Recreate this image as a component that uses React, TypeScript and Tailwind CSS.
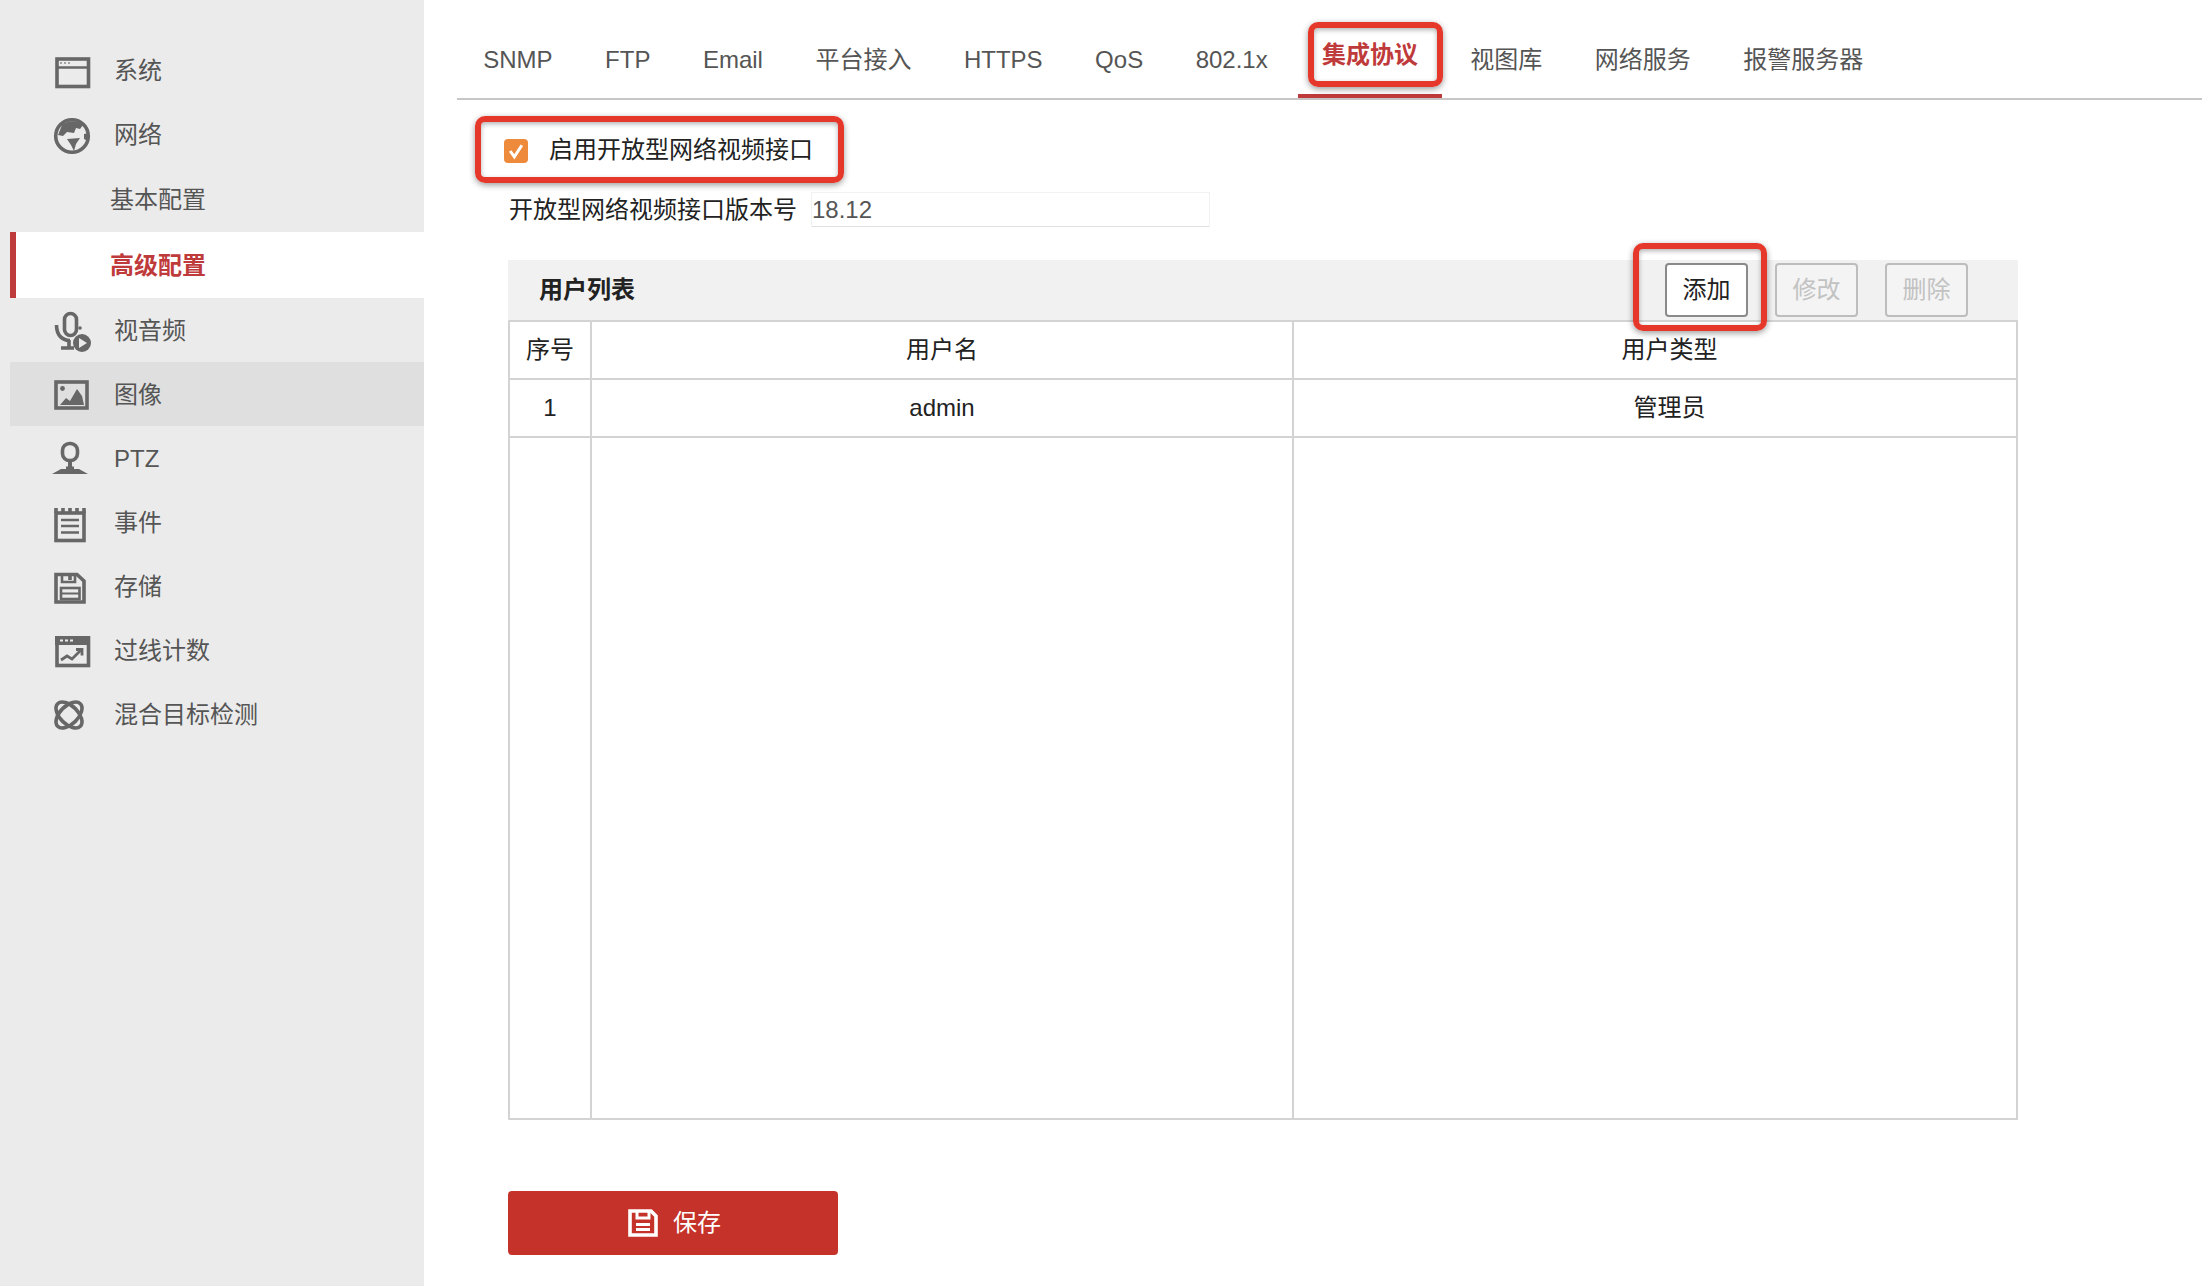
import type { ReactNode } from "react";

const tabs = ["SNMP", "FTP", "Email", "平台接入", "HTTPS", "QoS", "802.1x", "集成协议", "视图库", "网络服务", "报警服务器"];

// red callout drawn on top of the screenshot
const Callout = ({ className }: { className: string }) => (
  <div
    className={`absolute pointer-events-none rounded-[10px] border-[6px] border-[#e6372b] shadow-[0_2px_6px_rgba(0,0,0,0.4),inset_0_2px_5px_rgba(0,0,0,0.3)] ${className}`}
  />
);

const Icon = ({ children }: { children: ReactNode }) => (
  <svg
    viewBox="0 0 40 40"
    fill="none"
    stroke="#676767"
    strokeWidth={3.6}
    className="w-[40px] h-[40px] shrink-0 overflow-visible"
  >
    {children}
  </svg>
);

const icons: Record<string, ReactNode> = {
  system: (
    <>
      <rect x="5" y="9" width="31.5" height="27.5" />
      <path d="M4 17.5h33" strokeWidth={2.4} />
      <path d="M8 13h2M12 13h2M16 13h2" strokeWidth={1.6} stroke="#8a8a8a" />
    </>
  ),
  network: (
    <>
      <circle cx="20" cy="22" r="16.3" />
      <path d="M10 11C16 6 25 6 31 11L28 15L24 14L22 19L15 18L11 22L6 21Z" fill="#676767" stroke="none" />
      <path d="M15 25L28 24L24 30L22 37L19 31Z" fill="#676767" stroke="none" />
      <path d="M32 20L37 19L36 27L32 25Z" fill="#676767" stroke="none" />
    </>
  ),
  av: (
    <>
      <rect x="12.5" y="3.5" width="12" height="22" rx="6" />
      <path d="M4.5 15C4.5 26 11 30.5 18 30.5" />
      <path d="M17 30v7M9 38h13" />
      <circle cx="28" cy="18" r="1.8" fill="#676767" stroke="none" />
      <circle cx="30" cy="33" r="9" fill="#676767" stroke="none" />
      <path d="M27 28L35 33L27 38Z" fill="#ebebeb" stroke="none" />
    </>
  ),
  image: (
    <>
      <rect x="4" y="8" width="31" height="26" />
      <circle cx="10.5" cy="14.5" r="2.4" fill="#676767" stroke="none" />
      <path d="M8 31L14 24L18 27L25 15L30 22L32 31Z" fill="#676767" stroke="none" />
    </>
  ),
  ptz: (
    <>
      <rect x="10.5" y="5.5" width="15" height="17" rx="7" />
      <path d="M16 22h4v7h-4z" fill="#676767" stroke="none" />
      <path d="M9 31H14V28.5H22V31H27L36 36H0Z" fill="#676767" stroke="none" />
    </>
  ),
  event: (
    <>
      <rect x="4" y="11" width="28" height="27.5" />
      <path d="M4 6v5M11 6v5M18 6v5M25 6v5M32 6v5" />
      <path d="M9 18h18M9 24h18M9 30.5h18" strokeWidth={2.6} />
    </>
  ),
  storage: (
    <>
      <path d="M4 8.5H25L32 15V36H4Z" />
      <path d="M10 8v8h13V8" strokeWidth={2.6} />
      <path d="M18 9v5" />
      <rect x="9" y="22" width="18.5" height="11" strokeWidth={2.6} />
      <path d="M9 27.5h18.5" strokeWidth={2} />
    </>
  ),
  count: (
    <>
      <rect x="5" y="8" width="31.5" height="27.5" />
      <rect x="3" y="6" width="35" height="9" fill="#676767" stroke="none" />
      <path d="M8 10.5h3M13 10.5h3M18 10.5h3" stroke="#ebebeb" strokeWidth={2.2} />
      <path d="M9 30L15 26L20 29L29 20" strokeWidth={2.8} />
      <path d="M24 19.5h6v6" strokeWidth={2.8} />
    </>
  ),
  mixed: (
    <>
      <ellipse cx="17" cy="21" rx="16" ry="9" transform="rotate(45 17 21)" />
      <ellipse cx="17" cy="21" rx="16" ry="9" transform="rotate(-45 17 21)" />
    </>
  ),
};

const NavItem = ({ icon, label, active }: { icon: string; label: string; active?: boolean }) => (
  <div className={`h-16 flex items-center gap-[22px] pl-[42px] ${active ? "bg-[#dfdfdf]" : ""}`}>
    <Icon>{icons[icon]}</Icon>
    <span className="pt-[2px]">{label}</span>
  </div>
);

const Sidebar = () => (
  <aside className="w-[424px] shrink-0 bg-[#ebebeb] pt-[38px] pl-[10px] text-[#555555]">
    <NavItem icon="system" label="系统" />
    <NavItem icon="network" label="网络" />
    <div className="h-[66px] flex items-center pl-[100px] pt-[2px]">基本配置</div>
    <div className="h-[66px] flex items-center pl-[94px] pt-[2px] bg-white border-l-[6px] border-[#bf3a3a] text-[#bf3a3a] font-bold">
      高级配置
    </div>
    <NavItem icon="av" label="视音频" />
    <NavItem icon="image" label="图像" active />
    <NavItem icon="ptz" label="PTZ" />
    <NavItem icon="event" label="事件" />
    <NavItem icon="storage" label="存储" />
    <NavItem icon="count" label="过线计数" />
    <NavItem icon="mixed" label="混合目标检测" />
  </aside>
);

const Tabs = () => (
  <div className="ml-[33px] h-[100px] flex border-b-2 border-[#c6c6c6] text-[#555555]">
    {tabs.map((tab) =>
      tab === "集成协议" ? (
        <div
          key={tab}
          className="relative ml-[4px] mr-[2px] h-[98px] px-[24px] pt-[16px] flex items-center border-b-4 border-[#bf3a3a] text-[#bf3a3a] font-bold"
        >
          {tab}
          <Callout className="left-[10px] top-[22px] w-[135px] h-[65px]" />
        </div>
      ) : (
        <div key={tab} className="h-[98px] px-[26.25px] pt-[22px] flex items-center">
          {tab}
        </div>
      ),
    )}
  </div>
);

const ActionButton = ({ label, disabled }: { label: string; disabled?: boolean }) => (
  <button
    className={`w-[83px] h-[54px] rounded-[4px] border-2 ${
      disabled ? "border-[#bdbdbd] bg-[#f4f4f4] text-[#c2c2c2]" : "border-[#8a8a8a] bg-white text-[#222222]"
    }`}
  >
    {label}
  </button>
);

const UserTable = () => (
  <div className="ml-[4px] w-[1510px] text-[#222222]">
    <div className="h-[60px] flex items-center justify-between pl-[31px] pr-[50px] bg-[#f1f1f1]">
      <span className="font-bold">用户列表</span>
      <div className="flex gap-[27px]">
        <div className="relative">
          <ActionButton label="添加" />
          <Callout className="-left-[32px] -top-[20px] w-[134px] h-[88px]" />
        </div>
        <ActionButton label="修改" disabled />
        <ActionButton label="删除" disabled />
      </div>
    </div>
    <table className="w-full table-fixed border-collapse text-center">
      <colgroup>
        <col className="w-[82px]" />
        <col className="w-[702px]" />
        <col />
      </colgroup>
      <tbody className="[&_td]:border-2 [&_td]:border-[#d3d3d3]">
        <tr className="h-[58px]">
          <td>序号</td>
          <td>用户名</td>
          <td className="pl-[29px]">用户类型</td>
        </tr>
        <tr className="h-[58px]">
          <td>1</td>
          <td>admin</td>
          <td className="pl-[29px]">管理员</td>
        </tr>
        <tr className="h-[682px]">
          <td />
          <td />
          <td />
        </tr>
      </tbody>
    </table>
  </div>
);

export default function App() {
  return (
    <div className="flex w-full h-[1286px] overflow-hidden bg-white text-[24px] leading-[32px] [font-family:'Liberation_Sans','Noto_Sans_CJK_SC',sans-serif]">
      <Sidebar />
      <main className="flex-1 min-w-0">
        <Tabs />
        <div className="pl-[80px]">
          <div className="relative mt-[30px] h-[40px] w-[310px] flex items-center gap-[21px] text-[#222222]">
            <span className="mt-[2px] w-[24px] h-[24px] rounded-[4px] bg-[#ee8a3c] flex items-center justify-center">
              <svg viewBox="0 0 24 24" className="w-[20px] h-[20px]" fill="none" stroke="white" strokeWidth={3.5}>
                <path d="M5 12l5 7L19 5" />
              </svg>
            </span>
            启用开放型网络视频接口
            <Callout className="-left-[29px] -top-[14px] w-[369px] h-[67px]" />
          </div>
          <div className="mt-[22px] ml-[5px] flex items-center gap-[14px]">
            <span className="text-[#222222]">开放型网络视频接口版本号</span>
            <input
              readOnly
              value="18.12"
              className="w-[399px] h-[35px] outline-none border border-[#f2f2f2] border-b-[#e2e2e2] text-[#555555]"
            />
          </div>
          <div className="mt-[33px]">
            <UserTable />
          </div>
          <button className="mt-[71px] ml-[4px] w-[330px] h-[64px] pl-[3px] rounded-[4px] bg-[#c5322a] text-white flex items-center justify-center gap-[15px]">
            <svg viewBox="0 0 30 28" className="w-[30px] h-[28px]" fill="none" stroke="white">
              <path d="M2 2H23L28 7V26H2Z" strokeWidth={3.6} />
              <path d="M9 1v8h12V1" strokeWidth={3} />
              <path d="M8 15.5h14M8 20.5h14" strokeWidth={3} />
            </svg>
            保存
          </button>
        </div>
      </main>
    </div>
  );
}
